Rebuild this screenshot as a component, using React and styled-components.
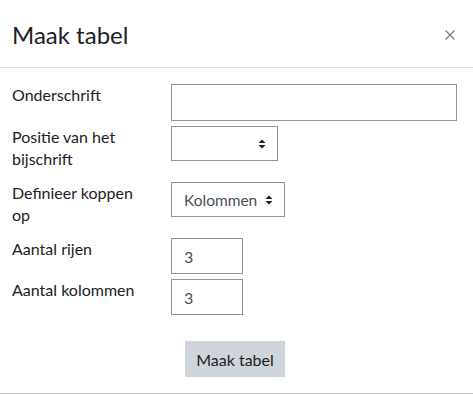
import React from 'react'
import styled, { createGlobalStyle } from 'styled-components'

const GlobalStyle = createGlobalStyle`
  body {
    margin: 0;
    background: #fff;
    font-family: Lato, "Noto Sans", sans-serif;
    color: #1d2125;
  }
`;

const Modal = styled.div`
  width: 473px;
  height: 394px;
  background: #fff;
  display: flex;
  flex-direction: column;
`;

const Header = styled.div`
  height: 68px;
  box-sizing: border-box;
  border-bottom: 1px solid #dee2e6;
  display: flex;
  align-items: center;
  justify-content: space-between;
  padding: 2px 18px 0 12px;
`;

const Title = styled.h5`
  margin: 0;
  font-size: 24px;
  font-weight: 400;
  line-height: 28px;
  color: #1d2125;
`;

const Close = styled.button`
  border: 0;
  background: none;
  padding: 0;
  width: 10px;
  height: 10px;
  display: flex;
  cursor: pointer;
`;

const Body = styled.div`
  flex: 1;
  box-sizing: border-box;
  border-bottom: 1px solid #ccc;
  padding: 16px 16px 0 12px;
`;

const Row = styled.div`
  display: grid;
  grid-template-columns: 159px 1fr;
  align-items: start;
  margin-bottom: ${p => p.$gap ?? 5}px;
`;

const Label = styled.label`
  font-size: 16px;
  line-height: 22px;
  padding: 0 0 ${p => p.$pb || 0}px;
  color: #1d2125;
`;

const Input = styled.input`
  box-sizing: border-box;
  width: ${p => p.$w};
  height: ${p => p.$h || 36}px;
  border: 1px solid #8f959e;
  border-radius: 0;
  padding: 0 12px;
  font-family: inherit;
  font-size: 16px;
  color: #495057;
  background: #fff;
  outline: none;
`;

const SelectBox = styled.div`
  box-sizing: border-box;
  width: ${p => p.$w}px;
  height: 35px;
  border: 1px solid #8f959e;
  display: flex;
  align-items: center;
  justify-content: space-between;
  padding: 0 11px 0 12px;
  font-size: 15.5px;
  color: #495057;
`;

const Actions = styled.div`
  padding: 26px 0 0 173px;
`;

const Button = styled.button`
  width: 100px;
  height: 36px;
  border: 0;
  border-radius: 0;
  background: #ced4da;
  color: #1d2125;
  font-family: inherit;
  font-size: 16px;
  cursor: pointer;
`;

const Arrows = () => (
  <svg width="8" height="10" viewBox="0 0 8 10">
    <path d="M4 0.5 L7.5 4 L0.5 4 Z M0.5 6 L7.5 6 L4 9.5 Z" fill="#1d2125" />
  </svg>
)

const Select = ({ w, value }) => (
  <SelectBox $w={w}>
    <span>{value}</span>
    <Arrows />
  </SelectBox>
)

const App = () => (
  <Modal>
    <GlobalStyle />
    <Header>
      <Title>Maak tabel</Title>
      <Close aria-label="Sluiten">
        <svg width="10" height="10" viewBox="0 0 10 10">
          <path d="M0.5 0.5 L9.5 9.5 M9.5 0.5 L0.5 9.5" stroke="#7a7a7a" strokeWidth="1.2" />
        </svg>
      </Close>
    </Header>
    <Body>
      <Row>
        <Label>Onderschrift</Label>
        <Input $w="286px" $h={37} />
      </Row>
      <Row>
        <Label $pb={7}>Positie van het<br />bijschrift</Label>
        <Select w={107} value="" />
      </Row>
      <Row>
        <Label $pb={7}>Definieer koppen<br />op</Label>
        <Select w={114} value="Kolommen" />
      </Row>
      <Row>
        <Label>Aantal rijen</Label>
        <Input $w="72px" defaultValue="3" />
      </Row>
      <Row $gap={0}>
        <Label>Aantal kolommen</Label>
        <Input $w="72px" defaultValue="3" />
      </Row>
      <Actions>
        <Button>Maak tabel</Button>
      </Actions>
    </Body>
  </Modal>
)

export default App
